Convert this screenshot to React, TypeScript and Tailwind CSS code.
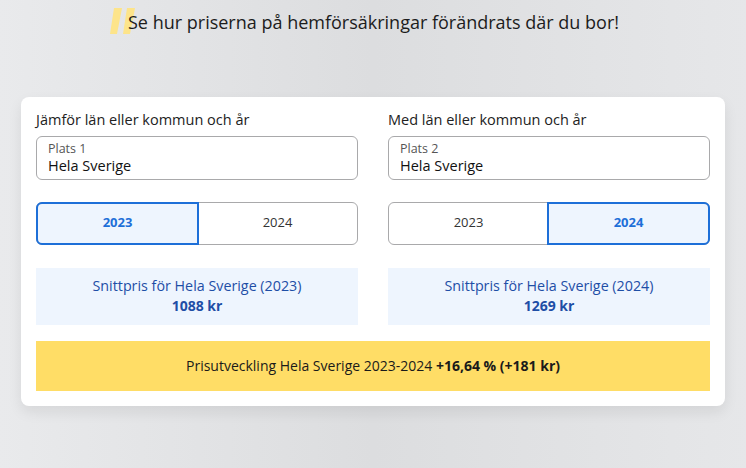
import React, { useState } from 'react';

const font = { fontFamily: '"Open Sans", "Liberation Sans", sans-serif' };

const YearToggle = ({ active, onChange }: { active: string; onChange: (y: string) => void }) => (
  <div className="flex h-[43px] rounded-md border border-[#a9a9ab]">
    {['2023', '2024'].map((y, i) => (
      <button
        key={y}
        onClick={() => onChange(y)}
        className={`flex-1 text-[13px] ${
          active === y
            ? `-m-px border-2 border-[#1d6fd8] bg-[#eef5fe] font-bold text-[#1d6fd8] ${i === 0 ? 'rounded-l-md' : 'rounded-r-md'}`
            : 'text-[#333]'
        }`}
      >
        {y}
      </button>
    ))}
  </div>
);

const PlaceColumn = ({ label, plats, year, setYear }: { label: string; plats: string; year: string; setYear: (y: string) => void }) => (
  <div className="flex flex-col">
    <p className="text-[14.5px] text-[#222] leading-none mt-[9px]">{label}</p>
    <div className="mt-[8px] h-[44px] rounded-md border border-[#a9a9ab] px-[11px] pt-[4px]">
      <p className="text-[12.5px] text-[#555] leading-[15px]">{plats}</p>
      <p className="text-[14.5px] text-[#111] leading-[19px]">Hela Sverige</p>
    </div>
    <div className="mt-[22px]">
      <YearToggle active={year} onChange={setYear} />
    </div>
    <div className="mt-[23px] flex h-[57px] flex-col items-center justify-center bg-[#eef5fe] text-[#1e4ea6]">
      <p className="text-[14.3px] leading-[19px]">Snittpris för Hela Sverige ({year})</p>
      <p className="text-[14px] font-bold leading-[21px]">{year === '2023' ? '1088 kr' : '1269 kr'}</p>
    </div>
  </div>
);

export default function App() {
  const [y1, setY1] = useState('2023');
  const [y2, setY2] = useState('2024');

  return (
    <div style={font} className="min-h-[468px] w-full bg-gradient-to-r from-[#e9eaec] via-[#dcdddf] to-[#e6e7e9] pb-[61px]">
      <div className="flex h-[97px] items-start pl-[110px] pt-[8px]">
        <svg width="26" height="26" viewBox="0 0 26 26" className="shrink-0">
          <polygon points="4,0 12,0 7,26 0,26" fill="#fde48a" />
          <polygon points="17,0 25,0 20,26 13,26" fill="#fde48a" />
        </svg>
        <h1 className="-ml-[8px] mt-[1px] text-[18px] leading-[26px] text-[#1c1c1c]">
          Se hur priserna på hemförsäkringar förändrats där du bor!
        </h1>
      </div>
      <div className="mx-[21px] rounded-lg bg-white px-[15px] pb-[15px] pt-[7px] shadow-[0_6px_14px_rgba(0,0,0,0.08)]">
        <div className="grid grid-cols-2 gap-[30px]">
          <PlaceColumn label="Jämför län eller kommun och år" plats="Plats 1" year={y1} setYear={setY1} />
          <PlaceColumn label="Med län eller kommun och år" plats="Plats 2" year={y2} setYear={setY2} />
        </div>
        <div className="mt-[16px] flex h-[50px] items-center justify-center bg-[#ffdd66] text-[14px] text-[#1a1a1a]">
          Prisutveckling Hela Sverige 2023-2024&nbsp;<span className="font-bold">+16,64 % (+181 kr)</span>
        </div>
      </div>
    </div>
  );
}
